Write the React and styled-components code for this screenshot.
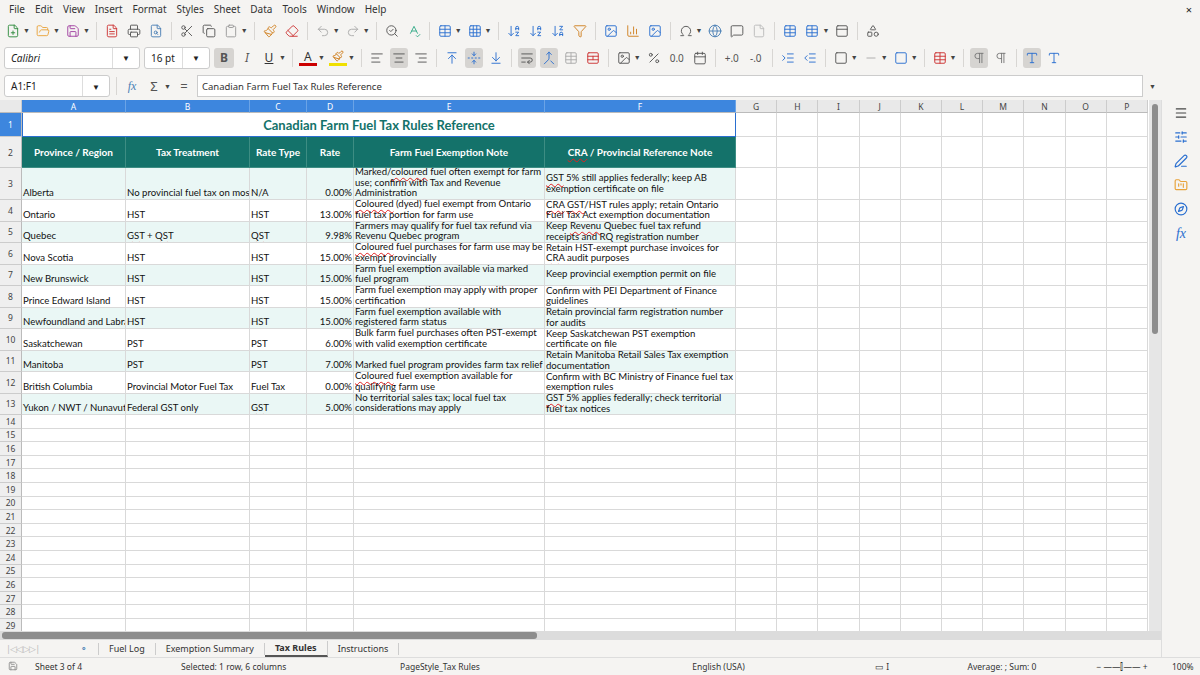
import React from "react";
import styled, { createGlobalStyle } from "styled-components";
import {
  FilePlus, FolderOpen, Save, FileText, Printer, FileSearch, Scissors, Copy, Clipboard,
  Paintbrush, Eraser, Undo2, Redo2, SearchCheck, SpellCheck, Table, Grid3x3, ArrowDownAZ,
  ArrowDownZA, Filter, Image, BarChart3, Omega, Globe, MessageSquare, File, PanelTop,
  Shapes, AlignLeft, AlignCenter, AlignRight, ArrowUpToLine, FoldVertical,
  ArrowDownToLine, WrapText, Merge, TableCellsSplit, Percent, Calendar, IndentIncrease,
  IndentDecrease, Square, Minus, Pilcrow, Menu, SlidersHorizontal, PenLine, FolderKanban,
  Compass, Type
} from "lucide-react";

const G = createGlobalStyle`
  html,body{margin:0;padding:0;background:#f5f4f2;}
  body{font-family:"Noto Sans","Open Sans",sans-serif;font-size:10px;color:#222;overflow:hidden;}
`;
const Root = styled.div`width:1200px;height:675px;display:flex;flex-direction:column;overflow:hidden;`;
const MenuBar = styled.div`height:18px;flex-shrink:0;display:flex;align-items:center;padding:0 4px;font-size:10px;position:relative;`;
const MenuItem = styled.span`padding:0 5px;color:#333;`;
const Close = styled.span`position:absolute;right:8px;top:2px;font-size:11px;`;
const Bar = styled.div`height:${p=>p.h}px;flex-shrink:0;display:flex;align-items:center;padding:0 4px;gap:4px;`;
const Ic = styled.span`display:inline-flex;align-items:center;justify-content:center;width:${p=>p.w||18}px;height:20px;border-radius:3px;
  background:${p=>p.on?"#d6d4d1":"transparent"};color:${p=>p.c||"#555"};`;
const Sep = styled.span`width:1px;height:18px;background:#d8d6d3;margin:0 2px;`;
const Dd = styled.span`font-size:7px;color:#444;margin-left:-3px;`;
const Combo = styled.div`height:22px;width:${p=>p.w}px;background:#fff;border:1px solid #ccc;border-radius:3px;display:flex;align-items:center;
  font-size:10px;padding-left:6px;box-sizing:border-box;justify-content:space-between;font-style:${p=>p.i?"italic":"normal"};`;
const ComboBtn = styled.span`width:26px;height:100%;border-left:1px solid #ddd;display:flex;align-items:center;justify-content:center;font-size:8px;font-style:normal;`;
const FormulaInput = styled.div`flex:1;height:20px;background:#fff;border:1px solid #ccc;display:flex;align-items:center;padding-left:4px;font-size:9.5px;color:#333;`;
const Main = styled.div`flex:1;display:flex;min-height:0;`;
const SheetArea = styled.div`width:1161px;display:flex;flex-direction:column;`;
const GridWrap = styled.div`flex:1;display:flex;min-height:0;background:#fff;overflow:hidden;`;
const Grid = styled.div`display:grid;width:1149px;align-content:start;
  grid-template-columns:22px 104px 124px 57px 47px 191px 191px repeat(10,41.2px);
  grid-template-rows:13px 24px 31px 32px repeat(10,21.5px) repeat(16,13.6px);
  font-family:Lato,"Noto Sans",sans-serif;overflow:hidden;`;
const ColH = styled.div`background:${p=>p.sel?"#3d86de":"#e9e9e9"};color:${p=>p.sel?"#fff":"#444"};font-family:"Noto Sans",sans-serif;
  font-size:8.5px;display:flex;align-items:center;justify-content:center;border-right:1px solid ${p=>p.sel?"#6aa3e6":"#ccc"};border-bottom:1px solid #bbb;`;
const RowH = styled.div`background:${p=>p.sel?"#3d86de":"#efefef"};color:${p=>p.sel?"#fff":"#444"};font-family:"Noto Sans",sans-serif;
  font-size:8.5px;display:flex;align-items:center;justify-content:center;border-bottom:1px solid #ccc;border-right:1px solid #bbb;`;
const Cell = styled.div`border-right:1px solid ${p=>p.hd?"#3d8d83":"#d9d9d9"};border-bottom:1px solid ${p=>p.hd?"#3d8d83":"#d9d9d9"};
  background:${p=>p.hd?"#14726a":p.alt?"#eaf7f5":"#fff"};color:${p=>p.hd?"#fff":"#111"};font-size:${p=>p.hd?"10px":"9.6px"};
  font-weight:${p=>p.hd?700:400};display:flex;align-items:${p=>p.hd?"center":p.mid?"center":"flex-end"};justify-content:${p=>p.hd?"center":p.r?"flex-end":"flex-start"};
  padding:0 1px;line-height:10.6px;overflow:hidden;white-space:${p=>p.wrap?"normal":"nowrap"};box-sizing:border-box;text-align:${p=>p.hd?"center":"left"};`;
const Title = styled.div`grid-column:2 / 8;border:1.5px solid #2a6fd0;border-top:none;background:#fff;color:#14726a;font-weight:700;font-size:13px;
  display:flex;align-items:center;justify-content:center;font-family:Lato,sans-serif;box-sizing:border-box;`;
const VScroll = styled.div`width:12px;background:#e6e6e6;display:flex;justify-content:center;padding-top:4px;`;
const Thumb = styled.div`width:6px;height:230px;background:#8d8d8d;border-radius:3px;`;
const HScroll = styled.div`height:9px;flex-shrink:0;background:#dcdcdc;display:flex;`;
const HThumb = styled.div`width:535px;margin-left:2px;height:7px;margin-top:1px;background:#8d8d8d;border-radius:3px;`;
const Tabs = styled.div`height:17px;flex-shrink:0;display:flex;align-items:center;font-size:9px;padding-left:6px;color:#333;`;
const Tab = styled.span`padding:0 10px;border-right:1px solid #ccc;height:12px;display:flex;align-items:center;
  ${p=>p.on&&"font-weight:700;border-bottom:2px solid #555;height:14px;"}`;
const Status = styled.div`height:17px;flex-shrink:0;display:flex;align-items:center;font-size:8.5px;color:#333;border-top:1px solid #ddd;background:#f5f4f2;`;
const St = styled.span`width:${p=>p.w}px;padding-left:${p=>p.pl||0}px;text-align:${p=>p.c?"center":"left"};flex-shrink:0;`;
const Side = styled.div`width:39px;border-left:1px solid #ddd;display:flex;flex-direction:column;align-items:center;gap:10px;padding-top:6px;`;
const U = styled.span`text-decoration:underline wavy #e02020;text-decoration-thickness:1px;text-underline-offset:2px;`;

const s = 14;
const icons1 = [
  [FilePlus,"#2e8b3d",1],[FolderOpen,"#e8a23a",1],[Save,"#a040a0",1],"|",[FileText,"#c33"],[Printer,"#555"],[FileSearch,"#4a7fb5"],"|",
  [Scissors],[Copy],[Clipboard,"#999",1],"|",[Paintbrush,"#d08020"],[Eraser,"#c33"],"|",[Undo2,"#aaa",1],[Redo2,"#aaa",1],"|",
  [SearchCheck],[SpellCheck,"#3a8"],"|",[Table,"#2a6fd0",1],[Grid3x3,"#2a6fd0",1],"|",[ArrowDownAZ,"#2a6fd0"],[ArrowDownAZ,"#2a6fd0"],[ArrowDownZA,"#2a6fd0"],[Filter,"#d08020"],"|",
  [Image,"#2a6fd0"],[BarChart3,"#d08020"],[Image,"#2a6fd0"],"|",[Omega,"#555",1],[Globe,"#4a7fb5"],[MessageSquare],[File,"#bbb"],"|",[Table,"#2a6fd0"],[Table,"#2a6fd0",1],[PanelTop],"|",[Shapes]
];
const icons2 = [
  [AlignLeft],[AlignCenter,"#555",0,1],[AlignRight],"|",[ArrowUpToLine,"#2a6fd0"],[FoldVertical,"#2a6fd0",0,1],[ArrowDownToLine,"#2a6fd0"],"|",
  [WrapText,"#555",0,1],[Merge,"#2a6fd0",0,1],[Table,"#aaa"],[TableCellsSplit,"#c33"],"|",[Image,"#555",1],[Percent],["0.0"],[Calendar],"|",["+.0"],["-.0"],"|",
  [IndentIncrease,"#2a6fd0"],[IndentDecrease,"#2a6fd0"],"|",[Square,"#555",1],[Minus,"#aaa",1],[Square,"#2a6fd0",1],"|",[Table,"#c33",1],"|",[Pilcrow,"#777",0,1],[Pilcrow,"#777"],"|",[Type,"#2a6fd0",0,1],[Type,"#2a6fd0"]
];
function renderIcons(list){
  return list.map((it,i)=>{
    if(it==="|") return <Sep key={i}/>;
    const [C,c,dd,on]=it;
    if(typeof C==="string") return <Ic key={i} w={20} style={{fontSize:10}}>{C}</Ic>;
    return <React.Fragment key={i}><Ic c={c} on={on}><C size={s} strokeWidth={1.6}/></Ic>{dd?<Dd>▼</Dd>:null}</React.Fragment>;
  });
}

const cols=["A","B","C","D","E","F","G","H","I","J","K","L","M","N","O","P"];
const data=[
  ["Alberta","No provincial fuel tax on most","N/A","0.00%",<>Marked/<U>coloured</U> fuel often exempt for farm use; confirm with Tax and Revenue Administration</>,<><U>GST</U> 5% still applies federally; keep AB exemption certificate on file</>],
  ["Ontario","HST","HST","13.00%",<><U>Coloured</U> (dyed) fuel exempt from Ontario fuel tax portion for farm use</>,<><U>CRA</U> <U>GST</U>/HST rules apply; retain Ontario Fuel Tax Act exemption documentation</>],
  ["Quebec",<><U>GST</U> + <U>QST</U></>,<U>QST</U>,"9.98%",<>Farmers may qualify for fuel tax refund via <U>Revenu</U> Quebec program</>,<>Keep <U>Revenu</U> Quebec fuel tax refund receipts and <U>RQ</U> registration number</>],
  ["Nova Scotia","HST","HST","15.00%",<><U>Coloured</U> fuel purchases for farm use may be exempt provincially</>,<>Retain HST-exempt purchase invoices for <U>CRA</U> audit purposes</>],
  ["New Brunswick","HST","HST","15.00%","Farm fuel exemption available via marked fuel program","Keep provincial exemption permit on file"],
  ["Prince Edward Island","HST","HST","15.00%","Farm fuel exemption may apply with proper certification","Confirm with PEI Department of Finance guidelines"],
  ["Newfoundland and Labrador","HST","HST","15.00%","Farm fuel exemption available with registered farm status","Retain provincial farm registration number for audits"],
  ["Saskatchewan","PST","PST","6.00%","Bulk farm fuel purchases often PST-exempt with valid exemption certificate","Keep Saskatchewan PST exemption certificate on file"],
  ["Manitoba","PST","PST","7.00%","Marked fuel program provides farm tax relief","Retain Manitoba Retail Sales Tax exemption documentation"],
  ["British Columbia","Provincial Motor Fuel Tax","Fuel Tax","0.00%",<><U>Coloured</U> fuel exemption available for qualifying farm use</>,"Confirm with BC Ministry of Finance fuel tax exemption rules"],
  ["Yukon / NWT / Nunavut","Federal GST only",<U>GST</U>,"5.00%","No territorial sales tax; local fuel tax considerations may apply",<><U>GST</U> 5% applies federally; check territorial fuel tax notices</>],
];
const heads=["Province / Region","Tax Treatment","Rate Type","Rate","Farm Fuel Exemption Note",<><U>CRA</U> / Provincial Reference Note</>];

export default function App(){
  const cells=[];
  cells.push(<ColH key="c0"/>);
  cols.forEach((c,i)=>cells.push(<ColH key={"h"+c} sel={i<6}>{c}</ColH>));
  cells.push(<RowH key="r1" sel>1</RowH>);
  cells.push(<Title key="t">Canadian Farm Fuel Tax Rules Reference</Title>);
  for(let i=0;i<10;i++) cells.push(<Cell key={"t"+i}/>);
  cells.push(<RowH key="r2">2</RowH>);
  heads.forEach((h,i)=>cells.push(<Cell hd key={"hd"+i}><span>{h}</span></Cell>));
  for(let i=0;i<10;i++) cells.push(<Cell key={"h2"+i}/>);
  data.forEach((row,ri)=>{
    const alt=ri%2===0;
    cells.push(<RowH key={"rr"+ri}>{ri+3}</RowH>);
    row.forEach((v,ci)=>cells.push(<Cell key={ri+"-"+ci} alt={alt} r={ci===3} wrap={ci>=4} mid={ci===5}><span>{v}</span></Cell>));
    for(let i=0;i<10;i++) cells.push(<Cell key={ri+"e"+i}/>);
  });
  for(let r=14;r<=29;r++){
    cells.push(<RowH key={"re"+r}>{r}</RowH>);
    for(let i=0;i<16;i++) cells.push(<Cell key={r+"x"+i}/>);
  }
  return (<Root><G/>
    <MenuBar>{["File","Edit","View","Insert","Format","Styles","Sheet","Data","Tools","Window","Help"].map(m=><MenuItem key={m}>{m}</MenuItem>)}<Close>×</Close></MenuBar>
    <Bar h={25}>{renderIcons(icons1)}</Bar>
    <Bar h={29}>
      <Combo w={136} i>Calibri<ComboBtn>▼</ComboBtn></Combo>
      <Combo w={66}>16 pt<ComboBtn>▼</ComboBtn></Combo>
      <Ic on w={20} style={{fontWeight:700,fontSize:12}}>B</Ic>
      <Ic w={18} style={{fontStyle:"italic",fontSize:12}}>I</Ic>
      <Ic w={18} style={{textDecoration:"underline",fontSize:12,color:"#333"}}>U</Ic><Dd>▼</Dd>
      <Sep/>
      <Ic w={18} style={{fontSize:12,color:"#333",borderBottom:"3px solid #c00",borderRadius:0,height:14}}>A</Ic><Dd>▼</Dd>
      <Ic w={18} c="#d08020" style={{borderBottom:"3px solid #f0e000",borderRadius:0,height:14}}><Paintbrush size={12}/></Ic><Dd>▼</Dd>
      <Sep/>
      {renderIcons(icons2)}
    </Bar>
    <Bar h={28}>
      <Combo w={106}>A1:F1<ComboBtn>▼</ComboBtn></Combo>
      <Sep/>
      <Ic c="#4a7fb5" style={{fontStyle:"italic",fontFamily:"serif",fontSize:12}}>fx</Ic>
      <Ic style={{fontSize:13}}>Σ</Ic><Dd>▼</Dd>
      <Ic style={{fontSize:13}}>=</Ic>
      <FormulaInput>Canadian Farm Fuel Tax Rules Reference</FormulaInput>
      <Dd style={{marginLeft:2,marginRight:40}}>▼</Dd>
    </Bar>
    <Main>
      <SheetArea>
        <GridWrap><Grid>{cells}</Grid><VScroll><Thumb/></VScroll></GridWrap>
        <HScroll><HThumb/></HScroll>
        <Tabs>
          <span style={{color:"#bbb",width:64,letterSpacing:-1}}>|◁◁ ▷▷|</span>
          <Tab style={{color:"#4a7fb5"}}>⚬</Tab>
          <Tab>Fuel Log</Tab><Tab>Exemption Summary</Tab><Tab on>Tax Rules</Tab><Tab>Instructions</Tab>
        </Tabs>
      </SheetArea>
      <Side>
        <Menu size={14} color="#444"/>
        <SlidersHorizontal size={14} color="#2a6fd0"/>
        <PenLine size={14} color="#2a6fd0"/>
        <FolderKanban size={14} color="#e8a23a"/>
        <Compass size={14} color="#2a6fd0"/>
        <span style={{fontStyle:"italic",fontFamily:"serif",color:"#2a6fd0",fontSize:14}}>fx</span>
      </Side>
    </Main>
    <Status>
      <St w={27} pl={8}><Save size={10} color="#888"/></St>
      <St w={146}>Sheet 3 of 4</St>
      <St w={219}>Selected: 1 row, 6 columns</St>
      <St w={205}>PageStyle_Tax Rules</St>
      <St w={227} c>English (USA)</St>
      <St w={100} c>▭ I</St>
      <St w={140} c>Average: ; Sum: 0</St>
      <St w={100} c>−  ——⫿——  +</St>
      <St w={30}>100%</St>
    </Status>
  </Root>);
}
